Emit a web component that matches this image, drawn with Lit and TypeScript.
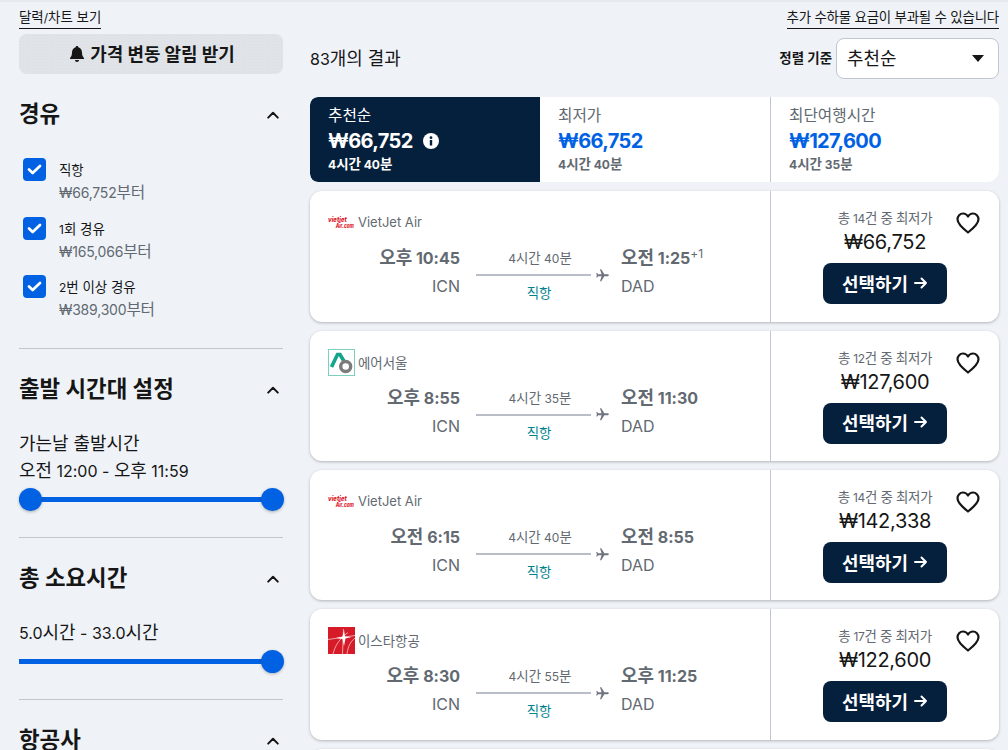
import { LitElement, html, css } from "lit";
import { customElement } from "lit/decorators.js";

/* Hangul in the reference runs about 12% larger than the Latin beside it. */
const k = (text: string) =>
  text.split(/([\uAC00-\uD7A3]+(?: [\uAC00-\uD7A3]+)*)/).map((part, i) =>
    i % 2 ? html`<span class="k">${part}</span>` : part
  );

const chevron = html`<svg class="chev" viewBox="0 0 12 8" width="12" height="8"><path d="M1.200 6.600 6 1.800l4.800 4.800" fill="none" stroke="#161616" stroke-width="2" stroke-linecap="round" stroke-linejoin="round"/></svg>`;
const check = html`<svg viewBox="0 0 16 12" width="15" height="11"><path d="M2 6l4 3.800L14 2.200" fill="none" stroke="#fff" stroke-width="3" stroke-linecap="round" stroke-linejoin="round"/></svg>`;

const logos: Record<string, unknown> = {
  vj: html`<span class="vj"><i>vietjet</i><i>Air.com</i></span>`,
  as: html`<span class="as"><svg viewBox="0 0 27 27" width="27" height="27"><path d="M3.500 18 9.500 5.500h2.500l4.500 7.500" fill="none" stroke="#12a58c" stroke-width="3.600"/><circle cx="17.700" cy="17.500" r="5" fill="none" stroke="#7b7b7b" stroke-width="3.400"/></svg></span>`,
  ze: html`<svg class="ze" viewBox="0 0 27 27" width="27" height="27"><rect width="27" height="27" fill="#d71a28"/><path d="M0 12.500 27 8.500M15.500 2 14.500 27M5 27C7 19 11 12 20 5.500M19 27C20 20 22 15 27 11" fill="none" stroke="#fff" stroke-width=".6"/><path d="M16 3l1 6.500 6.500.5-6 1.500L16 19l-1.500-7-6.500-1 6.500-1.500z" fill="#fff"/></svg>`,
};

interface Flight { logo: string; air: string; dep: string; depT: string; dur: string; arr: string; arrT: string; plus?: boolean; count: number; price: string; }
const flights: Flight[] = [
  { logo: "vj", air: "VietJet Air", dep: "오후", depT: "10:45", dur: "4시간 40분", arr: "오전", arrT: "1:25", plus: true, count: 14, price: "₩66,752" },
  { logo: "as", air: "에어서울", dep: "오후", depT: "8:55", dur: "4시간 35분", arr: "오전", arrT: "11:30", count: 12, price: "₩127,600" },
  { logo: "vj", air: "VietJet Air", dep: "오전", depT: "6:15", dur: "4시간 40분", arr: "오전", arrT: "8:55", count: 14, price: "₩142,338" },
  { logo: "ze", air: "이스타항공", dep: "오후", depT: "8:30", dur: "4시간 55분", arr: "오후", arrT: "11:25", count: 17, price: "₩122,600" },
];

@customElement("app-root")
export class AppRoot extends LitElement {
  static styles = css`
    :host { display: block; height: 750px; overflow: hidden; background: #eff3f8; color: #161616;
      font-family: Inter, "Noto Sans CJK KR", sans-serif; }
    * { box-sizing: border-box; }
    .k { font-size: 1.12em; }
    .strip { height: 2px; background: #e6e9ee; }
    .page { display: flex; gap: 27px; padding: 0 9px 0 19px; }
    .side { width: 264px; flex: none; }
    .main { flex: 1; min-width: 0; }
    .link { font-size: 12px; line-height: 15px; border-bottom: 1px solid #161616; display: inline-block; padding-bottom: 3px; }
    .top-left { padding-top: 4px; height: 32px; }
    .bell-btn { height: 40px; border-radius: 8px; padding-left: 3px; background-color: #e0e4e9; background-image: radial-gradient(#dbdfe4 .6px, transparent .8px); background-size: 3px 3px; display: flex; align-items: center; justify-content: center; gap: 6px; font-size: 16px; font-weight: 700; }
    .bell-btn span { padding-bottom: 3px; }
    .sec { border-bottom: 1px solid #c1c7cf; }
    .sec:last-child { border: none; }
    .sec-h { display: flex; align-items: center; justify-content: space-between; padding-right: 4px; font-size: 20px; font-weight: 700; line-height: 28px; }
    .stops { padding: 26px 0 28px; height: 275px; }
    .stops .sec-h { margin-bottom: 29px; }
    .opt { display: flex; gap: 13px; padding-left: 4px; height: 58.500px; }
    .box { width: 23px; height: 23px; background: #0062e3; border-radius: 4px; display: flex; align-items: center; justify-content: center; flex: none; }
    .opt-l { font-size: 12px; line-height: 16px; padding-top: 4px; }
    .opt-p { font-size: 14px; line-height: 20px; color: #626971; margin-top: 4px; letter-spacing: -.2px; }
    .time { height: 189px; padding-top: 26px; }
    .time .sec-h { margin-bottom: 26px; }
    .txt { font-size: 16px; line-height: 27px; }
    .txt + .txt { margin-top: -1px; }
    .slider { position: relative; height: 5px; background: #0062e3; margin-top: 12px; }
    .thumb { position: absolute; top: -9px; width: 23px; height: 23px; border-radius: 50%; background: #0062e3; box-shadow: 0 1px 3px rgba(37,32,31,.3); }
    .dur { height: 162px; padding-top: 26px; }
    .dur .sec-h { margin-bottom: 26px; }
    .air { padding-top: 29px; }
    .air .sec-h { line-height: 21px; }
    .top-right { padding-top: 4px; height: 36px; text-align: right; }
    .top-right .link { letter-spacing: -.2px; }
    .head { display: flex; align-items: center; justify-content: space-between; height: 41px; }
    .cnt { font-size: 16px; padding-bottom: 3px; }
    .sort { display: flex; align-items: center; gap: 4px; }
    .sort b { font-size: 12px; padding-bottom: 3px; }
    .sel { width: 163px; height: 41px; background: #fff; border: 1px solid #c1c7cf; border-radius: 8px; display: flex; align-items: center; justify-content: space-between; padding: 0 14px 3px 10px; font-size: 16px; }
    .tri { width: 0; height: 0; margin-top: 3px; border-left: 6px solid transparent; border-right: 6px solid transparent; border-top: 7px solid #161616; }
    .tabs { display: grid; grid-template-columns: 230px 230px 229px; height: 85px; margin-top: 18px; background: #fff; border-radius: 8px 12px 12px 8px; overflow: hidden; }
    .tab { padding: 9px 18px; color: #626971; }
    .tab + .tab + .tab { border-left: 1px solid #c1c7cf; }
    .tab.on { background: #05203c; color: #fff; border-radius: 8px 0 0 8px; }
    .tab small { display: block; font-size: 14px; line-height: 20px; }
    .tab strong { display: flex; align-items: center; gap: 10px; font-size: 20px; font-weight: 700; line-height: 28px; color: #0062e3; margin-top: 1px; letter-spacing: -.65px; }
    .tab.on strong { color: #fff; }
    .tab em { display: block; font-style: normal; font-size: 12px; font-weight: 700; line-height: 16px; margin-top: 1px; }
    .cards { display: flex; flex-direction: column; gap: 9px; margin-top: 9.300px; }
    .card { height: 130.400px; flex: none; background: #fff; border-radius: 12px; box-shadow: 0 1px 3px rgba(37,32,31,.3); display: grid; grid-template-columns: 461px 1fr; }
    .left { padding: 18px 0 0 18px; border-right: 1px solid #c1c7cf; }
    .carrier { display: flex; align-items: center; gap: 3px; height: 27px; font-size: 12px; color: #626971; }
    .carrier span:last-child { padding-bottom: 1px; }
    .lat { font-size: 13px; }
    .vj { width: 27px; color: #e0202c; display: flex; flex-direction: column; font-size: 7px; line-height: 7px; font-weight: 800; }
    .vj i { transform: scaleX(.85); transform-origin: left; white-space: nowrap; }
    .vj i + i { padding-left: 9px; font-size: 5.500px; line-height: 6px; }
    .as { width: 27px; height: 27px; border: 1px solid #7bd0c0; display: block; }
    .as svg { margin: -1px; display: block; }
    .ze { display: block; }
    .leg { display: flex; margin: 10px 0 0 18px; }
    .pt { color: #626971; }
    .pt.d { width: 114px; text-align: right; }
    .pt b { display: block; font-size: 16px; line-height: 24px; font-weight: 700; white-space: nowrap; }
    .pt span.code { display: block; font-size: 16px; line-height: 24px; margin-top: 4px; }
    .pt sup { font-size: 12px; font-weight: 400; line-height: 0; vertical-align: 6px; }
    .mid { width: 134px; margin-left: 16px; }
    .mid .t { font-size: 12px; line-height: 16px; color: #626971; margin-top: 4px; padding-right: 6px; text-align: center; }
    .track { display: flex; align-items: center; gap: 4px; height: 14px; margin-top: 1px; }
    .track .line { flex: 1; height: 2px; background: #b8bdc6; }
    .track svg { display: block; flex: none; }
    .mid .s { font-size: 12px; line-height: 16px; color: #00838f; margin-top: 3px; padding-right: 8px; text-align: center; }
    .arr { padding-left: 11px; }
    .right { position: relative; display: flex; flex-direction: column; align-items: center; padding-top: 19px; }
    .of { font-size: 12px; line-height: 16px; color: #626971; letter-spacing: -.3px; }
    .price { font-size: 20px; line-height: 28px; margin-top: 1px; letter-spacing: -.3px; }
    .btn { width: 124px; height: 41px; margin-top: 7px; padding-bottom: 2px; background: #05203c; color: #fff; border-radius: 8px; display: flex; align-items: center; justify-content: center; gap: 6px; font-size: 16px; font-weight: 700; }
    .heart { position: absolute; top: 21px; right: 19px; }
  `;

  card(f: Flight) {
    return html`<div class="card">
      <div class="left">
        <div class="carrier">${logos[f.logo]}<span class=${f.logo === "vj" ? "lat" : ""}>${k(f.air)}</span></div>
        <div class="leg">
          <div class="pt d"><b>${k(f.dep)} ${f.depT}</b><span class="code">ICN</span></div>
          <div class="mid">
            <div class="t">${k(f.dur)}</div>
            <div class="track"><div class="line"></div><svg viewBox="0 0 24 24" width="15" height="15"><path transform="rotate(90 12 12)" d="M21 16v-2l-8-5V3.500c0-.83-.67-1.500-1.500-1.500S10 2.670 10 3.500V9l-8 5v2l8-2.500V19l-2 1.500V22l3.500-1 3.500 1v-1.500L13 19v-5.500l8 2.500z" fill="#6f7480"/></svg></div>
            <div class="s">${k("직항")}</div>
          </div>
          <div class="pt arr"><b>${k(f.arr)} ${f.arrT}${f.plus ? html`<sup>+1</sup>` : ""}</b><span class="code">DAD</span></div>
        </div>
      </div>
      <div class="right">
        <div class="of">${k("총")} ${f.count}${k("건 중 최저가")}</div>
        <div class="price">${f.price}</div>
        <div class="btn">${k("선택하기")}<svg viewBox="0 0 14 12" width="14" height="12"><path d="M1 6h11M7.500 1.500 12 6l-4.500 4.500" fill="none" stroke="#fff" stroke-width="2" stroke-linecap="round" stroke-linejoin="round"/></svg></div>
        <svg class="heart" viewBox="0 0 24 22" width="24" height="22"><path d="M12 20.500C5 15 1.500 11.500 1.500 7.300 1.500 4 4 1.500 7 1.500c2 0 3.800 1 5 3 1.200-2 3-3 5-3 3 0 5.500 2.500 5.500 5.800 0 4.200-3.500 7.700-10.500 13.200z" fill="none" stroke="#161616" stroke-width="2.200" stroke-linejoin="round"/></svg>
      </div>
    </div>`;
  }

  render() {
    return html`<div class="strip"></div>
    <div class="page">
      <aside class="side">
        <div class="top-left"><span class="link">${k("달력")}/${k("차트 보기")}</span></div>
        <div class="bell-btn"><svg viewBox="0 0 14 16" width="14" height="16"><path d="M7 0c.8 0 1.300.5 1.300 1.200C10.800 1.800 12 4 12 6.500c0 3 .8 4 2 5.500v1H0v-1c1.200-1.500 2-2.500 2-5.500C2 4 3.200 1.800 5.700 1.200 5.700.5 6.200 0 7 0zM5 14h4c0 1.200-.9 2-2 2s-2-.8-2-2z" fill="#161616"/></svg><span>${k("가격 변동 알림 받기")}</span></div>
        <section class="sec stops">
          <div class="sec-h"><span>${k("경유")}</span>${chevron}</div>
          ${[["직항","₩66,752부터"],["1회 경유","₩165,066부터"],["2번 이상 경유","₩389,300부터"]].map(o => html`<div class="opt"><span class="box">${check}</span><div><div class="opt-l">${k(o[0])}</div><div class="opt-p">${k(o[1])}</div></div></div>`)}
        </section>
        <section class="sec time">
          <div class="sec-h"><span>${k("출발 시간대 설정")}</span>${chevron}</div>
          <div class="txt">${k("가는날 출발시간")}</div>
          <div class="txt">${k("오전")} 12:00 - ${k("오후")} 11:59</div>
          <div class="slider"><span class="thumb" style="left:0"></span><span class="thumb" style="right:-1px"></span></div>
        </section>
        <section class="sec dur">
          <div class="sec-h"><span>${k("총 소요시간")}</span>${chevron}</div>
          <div class="txt">${k("5.0시간 - 33.0시간")}</div>
          <div class="slider"><span class="thumb" style="right:-1px"></span></div>
        </section>
        <section class="sec air"><div class="sec-h"><span>${k("항공사")}</span>${chevron}</div></section>
      </aside>
      <main class="main">
        <div class="top-right"><span class="link">${k("추가 수하물 요금이 부과될 수 있습니다")}</span></div>
        <div class="head"><span class="cnt">83${k("개의 결과")}</span><div class="sort"><b>${k("정렬 기준")}</b><div class="sel"><span>${k("추천순")}</span><span class="tri"></span></div></div></div>
        <div class="tabs">
          <div class="tab on"><small>${k("추천순")}</small><strong>₩66,752<svg viewBox="0 0 16 16" width="16" height="16"><circle cx="8" cy="8" r="8" fill="#fff"/><rect x="6.800" y="7" width="2.400" height="5.500" fill="#05203c"/><circle cx="8" cy="4.700" r="1.400" fill="#05203c"/></svg></strong><em>${k("4시간 40분")}</em></div>
          <div class="tab"><small>${k("최저가")}</small><strong>₩66,752</strong><em>${k("4시간 40분")}</em></div>
          <div class="tab"><small>${k("최단여행시간")}</small><strong>₩127,600</strong><em>${k("4시간 35분")}</em></div>
        </div>
        <div class="cards">${flights.map(f => this.card(f))}<div class="card"></div></div>
      </main>
    </div>`;
  }
}
